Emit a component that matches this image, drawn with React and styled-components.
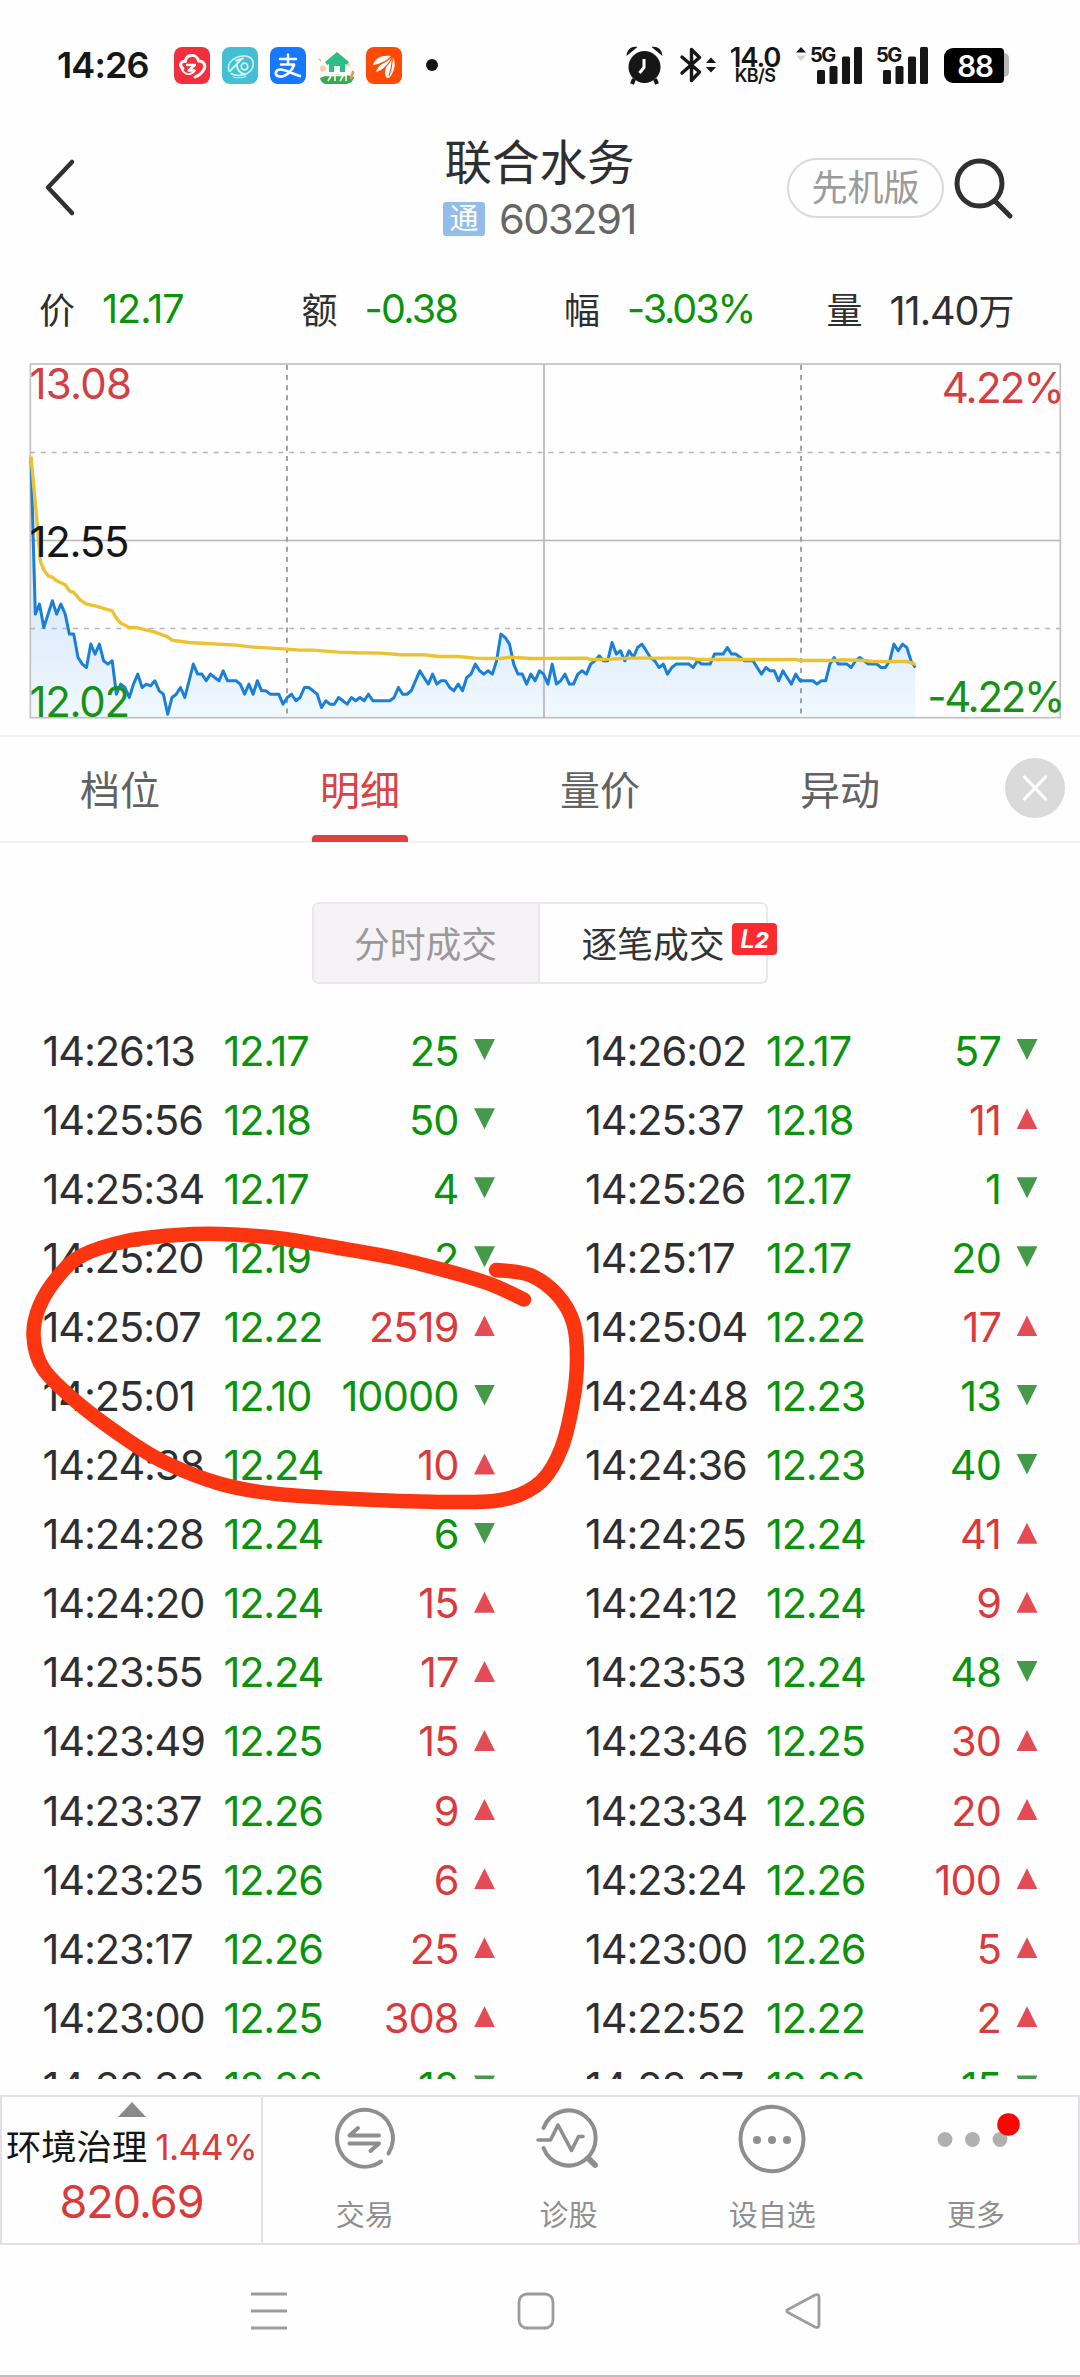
import React from 'react'
import styled, { createGlobalStyle } from 'styled-components'

const GREEN = '#0b930b'
const RED = '#d93a3c'

const GlobalStyle = createGlobalStyle`
  * {
    box-sizing: border-box;
  }

  body {
    margin: 0;
    background: #fefefe;
    color: #2f2f31;
    font-family: Inter, "Noto Sans CJK SC", sans-serif;
  }

  svg {
    display: block;
    flex: none;
    overflow: visible;
  }
`

const Screen = styled.div`
  position: relative;
  width: 1080px;
  height: 2377px;
  overflow: hidden;
  display: flex;
  flex-direction: column;
  border-bottom: 2px solid #bdbdbd;
`

/* ---------- status bar ---------- */

const StatusBar = styled.div`
  height: 130px;
  padding: 0 71px 0 57px;
  display: flex;
  align-items: center;
  justify-content: space-between;
  color: #161616;
`

const Group = styled.div`
  display: flex;
  align-items: center;
`

const Clock = styled.div`
  width: 117px;
  font-size: 36px;
  font-weight: 600;
  letter-spacing: -0.9px;
`

const AppIcons = styled.div`
  display: flex;
  gap: 12px;
`

const Dot = styled.div`
  width: 12px;
  height: 12px;
  margin-left: 24px;
  border-radius: 50%;
  background: #161616;
`

const Devices = styled.div`
  display: flex;
  gap: 17px;
`

const Speed = styled.div`
  width: 54px;
  margin: 0 14px 0 12px;
  text-align: center;
  font-weight: 600;
  font-size: 27.5px;
  line-height: 22px;
  letter-spacing: -1.2px;
  white-space: nowrap;

  small {
    display: block;
    font-size: 18px;
    line-height: 16px;
    letter-spacing: -0.6px;
  }
`

const SignalText = styled.text`
  font-size: 20px;
  font-weight: 700;
  letter-spacing: -1.6px;
`

const Battery = styled.div`
  display: flex;
  align-items: center;
  margin-left: 16px;

  &::after {
    content: '';
    width: 5px;
    height: 24px;
    border-radius: 0 6px 6px 0;
    background: #b9b7b9;
  }
`

const BatteryLevel = styled.div`
  width: 60px;
  height: 35px;
  padding-left: 2px;
  border-radius: 9px 4px 4px 9px;
  background: #000;
  color: #fff;
  font-size: 29.5px;
  font-weight: 600;
  line-height: 37px;
  text-align: center;
  letter-spacing: -1.2px;
`

/* ---------- header ---------- */

const Header = styled.div`
  height: 116px;
  padding: 0 67px 0 44px;
  display: grid;
  grid-template-columns: 1fr 200px 1fr;
  align-items: center;
`

const TitleBlock = styled.div`
  display: flex;
  flex-direction: column;
  align-items: center;
  gap: 11px;
  margin: 1px 0 0 22px;
`

const Title = styled.div`
  font-size: 47.5px;
  line-height: 50px;
  white-space: nowrap;
`

const Code = styled.div`
  display: flex;
  align-items: center;
  gap: 14px;
  line-height: 40px;
  font-size: 41.5px;
  letter-spacing: -1.4px;
  color: #666;
`

const Tag = styled.span`
  width: 42px;
  height: 34px;
  border-radius: 3px;
  background: #92bdea;
  color: #fff;
  font-size: 29px;
  line-height: 33px;
  letter-spacing: 0;
  text-align: center;
`

const HeaderTools = styled.div`
  display: flex;
  justify-content: flex-end;
  align-items: center;
  gap: 9px;
`

const Pill = styled.div`
  width: 157px;
  height: 60px;
  border: 2px solid #ddd8da;
  border-radius: 30px;
  color: #9b9b9b;
  font-size: 36px;
  line-height: 57px;
  text-align: center;
`

/* ---------- quote summary ---------- */

const Summary = styled.div`
  height: 118px;
  padding: 6px 0 0 39px;
  display: grid;
  grid-template-columns: repeat(4, 262.5px);
  align-items: center;
`

const Stat = styled.div`
  display: flex;
  align-items: center;
  gap: 27px;
  white-space: nowrap;
  font-size: 36px;
`

const StatValue = styled.span`
  margin-top: 1px;
  font-size: 39.5px;
  letter-spacing: ${(p) => p.$spacing || '-1px'};
  color: ${(p) => p.$color || 'inherit'};

  small {
    font-size: 36px;
  }
`

const AxisText = styled.text`
  font-size: 42px;
  letter-spacing: ${(p) => p.$spacing || '-1.2px'};
`

/* ---------- tabs ---------- */

const Tabs = styled.div`
  height: 108px;
  display: flex;
  align-items: stretch;
  border-top: 2px solid #f3f2f3;
  border-bottom: 2px solid #f3f2f3;
`

const Tab = styled.div`
  width: 240px;
  display: flex;
  flex-direction: column;
  align-items: center;
  color: ${(p) => (p.$active ? '#dd4243' : '#626262')};
  font-size: 40px;
  line-height: 108px;

  &::after {
    content: '';
    width: 96px;
    height: 7px;
    margin-top: -10px;
    flex: none;
    border-radius: 4px 4px 0 0;
    background: ${(p) => (p.$active ? '#dd4243' : 'transparent')};
  }
`

const CloseButton = styled.div`
  width: 60px;
  height: 60px;
  margin: 21px 0 0 45px;
  border-radius: 50%;
  background: #dbdadb;
  display: flex;
  align-items: center;
  justify-content: center;
`

const Segmented = styled.div`
  width: 456px;
  height: 82px;
  margin: 59px 0 32px 312px;
  display: flex;
  border: 2px solid #e9e7e9;
  border-radius: 7px;
  flex: none;
`

const Segment = styled.div`
  position: relative;
  width: 227px;
  padding-right: ${(p) => (p.$active ? '0' : '1px')};
  border-right: ${(p) => (p.$active ? '0' : '2px solid #e9e7e9')};
  border-radius: ${(p) => (p.$active ? '0' : '5px 0 0 5px')};
  background: ${(p) => (p.$active ? 'transparent' : '#f6f3f7')};
  color: ${(p) => (p.$active ? '#333' : '#9a989b')};
  font-size: 35.8px;
  line-height: 82px;
  text-align: center;
`

const LevelBadge = styled.span`
  position: absolute;
  top: 19px;
  right: -11px;
  width: 45px;
  height: 32px;
  border-radius: 4px;
  background: #fb2b30;
  color: #fff;
  font-size: 26px;
  font-weight: 600;
  font-style: italic;
  line-height: 32px;

  b {
    font-size: 22px;
    font-weight: 800;
  }
`

/* ---------- tick list ---------- */

const TickList = styled.div`
  height: 1063px;
  flex: none;
  overflow: hidden;
  padding-left: 42.5px;
  display: grid;
  grid-template-columns: repeat(2, 542.5px);
`

const TickRow = styled.div`
  height: 69.1px;
  display: grid;
  grid-template-columns: 181px 110px 124px 37.5px;
  align-items: center;
  font-size: 41.5px;
  letter-spacing: -1.1px;
  white-space: nowrap;
`

const Price = styled.span`
  color: ${GREEN};
  letter-spacing: -1.2px;
`

const Volume = styled.span`
  justify-self: end;
  margin-right: -1px;
  letter-spacing: -0.9px;
  color: ${(p) => (p.$up ? RED : GREEN)};
`

const Arrow = styled.i`
  justify-self: end;
  width: 21px;
  height: 21px;
  margin-top: -2px;
  background: ${(p) => (p.$up ? '#e54b55' : '#459a49')};
  clip-path: ${(p) => (p.$up ? 'polygon(50% 0, 100% 100%, 0 100%)' : 'polygon(0 0, 100% 0, 50% 100%)')};
`

/* ---------- bottom bar ---------- */

const BottomBar = styled.div`
  height: 150px;
  margin-top: 16px;
  flex: none;
  display: flex;
  border: 2px solid #e3dfe2;
`

const IndexCell = styled.div`
  width: 261px;
  flex: none;
  border-right: 2px solid #e3dfe2;
  display: flex;
  flex-direction: column;
  align-items: center;
  color: #d93a3c;
`

const IndexName = styled.div`
  display: flex;
  gap: 8px;
  margin-top: 9px;
  font-size: 35.3px;
  line-height: 44px;
  white-space: nowrap;

  b {
    color: #141414;
    font-weight: 400;
  }

  span {
    letter-spacing: -0.6px;
  }
`

const IndexValue = styled.div`
  margin-top: 8px;
  font-size: 45px;
  line-height: 48px;
  letter-spacing: -1px;
`

const Actions = styled.div`
  flex: 1;
  display: grid;
  grid-template-columns: repeat(4, 1fr);
`

const Action = styled.div`
  display: flex;
  flex-direction: column;
  align-items: center;
  gap: 26px;
  padding-top: 8px;
  font-size: 29px;
  line-height: 30px;
  color: #8f8f8f;
`

const MoreIconBox = styled.div`
  height: 70px;
  margin-right: 3px;
`

const NavBar = styled.div`
  flex: 1;
  padding: 2px 0 0 249px;
  display: flex;
  align-items: center;
  gap: 227px;
`

const Annotation = styled.svg`
  position: absolute;
  top: 1200px;
  left: 0;
  pointer-events: none;
`

/* ---------- chart data ---------- */

// one value per minute, in cents above 12.02
const prices = [
  78, 31, 34, 27, 31, 35, 31, 34, 31, 25,
  25, 18, 16, 15, 22, 19, 22, 17, 16, 17,
  7, 10, 9, 6, 10, 13, 9, 10, 9.5, 11,
  8, 7, 1, 6, 7, 9, 6, 11, 16, 13,
  13, 11, 13, 12, 11, 14, 11, 11, 11, 10,
  7, 10, 7, 11, 8, 8, 7, 7, 7, 4,
  6, 7, 5, 6, 9, 9, 8, 7, 3, 5,
  4, 4, 6, 5, 4, 6, 5, 6, 5, 7,
  5, 5, 5, 5, 5, 6, 9, 7, 7, 8,
  11, 14, 12, 10, 13, 10, 11, 11, 9, 8,
  10, 8, 12, 13, 16, 14, 13, 14, 13, 17,
  25, 24, 22, 16, 13, 13, 10, 13, 11, 14,
  13, 10, 16, 10, 11, 13, 10, 10, 13, 14,
  13, 16, 17, 18.5, 17, 17, 22.5, 19, 20, 17,
  20, 18, 21, 22, 20, 18, 17, 15, 16, 13,
  15, 16, 16, 16, 16, 15, 17, 16, 16, 16,
  19, 19, 19, 21, 19, 19, 18, 17, 17, 17,
  15, 13, 15, 14, 14, 11, 14, 12, 10, 13,
  11, 11, 11, 11, 10, 11, 11, 16, 18, 16,
  16, 16, 15, 17, 18, 17, 16, 16, 16, 15,
  15, 17, 22, 20, 22, 21, 17, 15,
]

// [minute, cents above 12.02]
const average = [
  [0, 78.3], [1.1, 63], [2.2, 46.8], [3, 44.3], [4, 42.5], [5, 42], [6, 41], [8, 39.8], [9, 38],
  [10, 37.5], [11.5, 35.3], [13, 34], [15, 33.5], [17, 32.7], [19, 32], [20, 29.8], [21, 28.3],
  [23, 27], [25, 26.9], [29, 25.6], [32, 24.2], [33, 23.2], [37, 22.5], [41, 22.2], [48, 21.7],
  [52, 21.1], [60, 20.5], [63, 20.2], [66, 20.2], [72, 19.6], [76.5, 19.4], [82, 19.3], [86.5, 18.8],
  [92, 18.8], [95.5, 18.3], [100, 18.3], [104, 17.8], [110, 17.7], [112, 18.1], [117, 17.7],
  [130, 17.8], [131, 17.4], [136, 17.5], [140, 17.8], [154, 17.8], [156, 17.4], [179, 17.4],
  [180, 17.1], [188, 17.1], [190, 17.3], [195, 17.1], [197, 16.8], [205, 16.8], [207, 16],
]

const toX = (minute) => (31 + minute * 4.272).toFixed(1)
const toY = (cents) => (353.5 - cents * 3.335).toFixed(1)
const priceLine = prices.map((c, i) => `${toX(i)},${toY(c)}`).join(' ')
const averageLine = average.map(([m, c]) => `${toX(m)},${toY(c)}`).join(' ')

const Chart = () => (
  <svg width="1080" height="371" viewBox="0 0 1080 371">
    <defs>
      <linearGradient id="fill" x1="0" y1="0" x2="0" y2="1">
        <stop offset="0" stopColor="#cfe6fb" />
        <stop offset="0.75" stopColor="#e3effc" />
        <stop offset="1" stopColor="#f1f9fe" />
      </linearGradient>
    </defs>
    <polygon points={`${toX(0)},353 ${priceLine} ${toX(207)},353`} fill="url(#fill)" />
    <g fill="none" stroke="#b9b5b9" strokeWidth="1.7">
      <rect x="30.3" y="0" width="1030" height="353.7" stroke="#c4c0c4" />
      <path d="M30 176.500H1060M544 0V354" />
      <path d="M30 88.500H1060M30 264.500H1060" strokeDasharray="5 5.8" />
      <path d="M287 1V354M801 1V354" stroke="#a3a0a6" strokeWidth="2" strokeDasharray="5 5.1" />
    </g>
    <polyline points={priceLine} fill="none" stroke="#1b7fd8" strokeWidth="3" strokeLinejoin="round" />
    <polyline points={averageLine} fill="none" stroke="#ecc233" strokeWidth="3.4" strokeLinejoin="round" />
    <AxisText x="29.500" y="35" fill="#d24044" $spacing="-0.8px">13.08</AxisText>
    <AxisText x="29.500" y="193" fill="#161616" $spacing="-1.3px">12.55</AxisText>
    <AxisText x="29.500" y="353" fill="#179117" $spacing="-1.3px">12.02</AxisText>
    <AxisText x="1063" y="39" textAnchor="end" fill="#d24044" $spacing="-1.8px">4.22%</AxisText>
    <AxisText x="1063" y="348" textAnchor="end" fill="#179117" $spacing="-2.3px">-4.22%</AxisText>
  </svg>
)

const leftTicks = [
  ['14:26:13', '12.17', 25, 0], ['14:25:56', '12.18', 50, 0], ['14:25:34', '12.17', 4, 0],
  ['14:25:20', '12.19', 2, 0], ['14:25:07', '12.22', 2519, 1], ['14:25:01', '12.10', 10000, 0],
  ['14:24:38', '12.24', 10, 1], ['14:24:28', '12.24', 6, 0], ['14:24:20', '12.24', 15, 1],
  ['14:23:55', '12.24', 17, 1], ['14:23:49', '12.25', 15, 1], ['14:23:37', '12.26', 9, 1],
  ['14:23:25', '12.26', 6, 1], ['14:23:17', '12.26', 25, 1], ['14:23:00', '12.25', 308, 1],
  ['14:22:36', '12.22', 12, 0],
]

const rightTicks = [
  ['14:26:02', '12.17', 57, 0], ['14:25:37', '12.18', 11, 1], ['14:25:26', '12.17', 1, 0],
  ['14:25:17', '12.17', 20, 0], ['14:25:04', '12.22', 17, 1], ['14:24:48', '12.23', 13, 0],
  ['14:24:36', '12.23', 40, 0], ['14:24:25', '12.24', 41, 1], ['14:24:12', '12.24', 9, 1],
  ['14:23:53', '12.24', 48, 0], ['14:23:46', '12.25', 30, 1], ['14:23:34', '12.26', 20, 1],
  ['14:23:24', '12.26', 100, 1], ['14:23:00', '12.26', 5, 1], ['14:22:52', '12.22', 2, 1],
  ['14:22:27', '12.22', 15, 0],
]

const TickColumn = ({ ticks }) => (
  <div>
    {ticks.map(([time, price, volume, up], index) => (
      <TickRow key={index}>
        <span>{time}</span>
        <Price>{price}</Price>
        <Volume $up={up}>{volume}</Volume>
        <Arrow $up={up} />
      </TickRow>
    ))}
  </div>
)

// points of the hand drawn loop, relative to the annotation's top
const loop = [
  [496, 70], [530, 75], [557.5, 95], [573.4, 123], [577, 158], [573.4, 199], [561.5, 248],
  [541.7, 281], [510, 298], [466.6, 302], [375.6, 300], [277, 294], [221, 284], [166, 263],
  [130.5, 242], [79, 204], [43.5, 169], [33.6, 137], [39.5, 106], [59.3, 75], [83, 55],
  [126.5, 41], [174, 35.3], [221, 34], [277, 38], [336, 47.5], [395, 58], [447, 71],
  [490, 84], [524, 99.5],
]

const smooth = (pts) =>
  pts.slice(0, -1).reduce((d, p, i) => {
    const before = pts[i - 1] || p
    const next = pts[i + 1]
    const after = pts[i + 2] || next
    const c1 = [p[0] + (next[0] - before[0]) / 6, p[1] + (next[1] - before[1]) / 6]
    const c2 = [next[0] - (after[0] - p[0]) / 6, next[1] - (after[1] - p[1]) / 6]
    return `${d}C${c1} ${c2} ${next}`
  }, `M${pts[0]}`)

/* ---------- icons ---------- */

const CloudApp = () => (
  <svg width="36" height="37" viewBox="0 0 36 37" fill="none" stroke="#fff" strokeLinecap="round" strokeLinejoin="round">
    <rect width="36" height="37" rx="8" fill="#f2303d" stroke="none" />
    <path d="M9 21.500C4 18 8 13.500 11.500 14.500C11 7 23 6 24.500 14C31 14 32 20 29.500 23C28 26 25 28.500 21 30" strokeWidth="2.900" />
    <path d="M13 18H21L14.500 23.500H20" strokeWidth="2.300" />
    <path d="M7.500 22C11 28 17 29 21 23.500" strokeWidth="1.800" />
  </svg>
)

const StoneApp = () => (
  <svg width="36" height="37" viewBox="0 0 36 37" fill="none" stroke="#d3f3f7" strokeLinecap="round">
    <rect width="36" height="37" rx="8" fill="#45bfd2" stroke="none" />
    <path d="M7 24C4 15 14 8 24 9C34 11 33 22 25 26.500C20 29 13 29 9 26.500" strokeWidth="1.500" />
    <path d="M14 13.500L21 11.500M19 12.500C14 18 11 21 8 24M15 18C15 23 18 26 23 27.500" strokeWidth="1.900" />
    <circle cx="22.500" cy="19.500" r="3.300" strokeWidth="1.700" />
    <path d="M11 30C15 31.500 21 31 24 29.500" strokeWidth="1" />
  </svg>
)

const PayApp = () => (
  <svg width="36" height="37" viewBox="0 0 36 37" fill="none" stroke="#fff" strokeLinecap="round">
    <rect width="36" height="37" rx="8" fill="#1677ff" stroke="none" />
    <path d="M10 12H26M18 7.500V17M11 17.500H24" strokeWidth="2.500" />
    <path d="M24 18C22 24 16 30 9.500 29.500C4 28.500 5 22.500 10.500 22.500C16 22.500 22 27 30 29" strokeWidth="2.700" />
  </svg>
)

const FarmApp = () => (
  <svg width="36" height="37" viewBox="0 0 36 37">
    <rect width="36" height="37" rx="8" fill="#fdfdf6" />
    <circle cx="5" cy="21.500" r="3" fill="#f8cfa4" />
    <circle cx="31" cy="18" r="1.600" fill="#f5d9b3" />
    <path d="M1 12L3 14" stroke="#a9c8b8" strokeWidth="1.200" />
    <path d="M2 31C10 27 28 27 36 30C35 35 31 37 27 37H9C5 37 3 35 2 31Z" fill="#35ab55" />
    <path d="M19 5L31 15L29 18L27 17V25H11V17L9 18L7 15Z" fill="#2dbd8b" />
    <rect x="16" y="19" width="6" height="6" fill="#f7fff9" />
    <path d="M8 28.500H29M10 34L13 29M17 34V29M22 34L25 29M28 34V29" stroke="#f3fbe9" strokeWidth="1.700" />
    <path d="M33 31L35 25" stroke="#e8964f" strokeWidth="2.600" strokeLinecap="round" />
  </svg>
)

const FeatherApp = () => (
  <svg width="36" height="37" viewBox="0 0 36 37" fill="#fff">
    <rect width="36" height="37" rx="8" fill="#fd4b05" />
    <path d="M7 18C9 11 16 8 25 9C20 14 14 17 7 18Z" />
    <path d="M10 25C12 19 18 13 25.500 10C23 17 18 23 10 25Z" />
    <path d="M20 30C17 23 22 16 26.500 10C31 16 28 26 23 31C21 31 20 31 20 30Z" />
    <path d="M9 19.500C16 17 21 14 26 9.500M14 25C20 20 24 15 27 10M23 29C25 23 26 18 26.500 12" stroke="#fd4b05" strokeWidth="1.100" fill="none" />
  </svg>
)

const AlarmIcon = () => (
  <svg width="37" height="38" viewBox="0 0 37 38">
    <circle cx="18.500" cy="21" r="16" fill="#161616" />
    <path d="M0.500 10C1 3 6 0 11.500 1ZM36.500 10C36 3 31 0 25.500 1Z" fill="#161616" />
    <path d="M8 33L6 38M29 33L31 38" stroke="#161616" strokeWidth="4" />
    <path d="M18 13V21.500L13.500 27" stroke="#fff" strokeWidth="3" fill="none" />
  </svg>
)

const BluetoothIcon = () => (
  <svg width="36" height="38" viewBox="0 0 36 38" fill="#161616">
    <path d="M2 11L19.500 26L11.500 34.500V3.500L19.500 11.500L2 27" fill="none" stroke="#161616" strokeWidth="3.400" strokeLinejoin="round" strokeLinecap="round" />
    <path d="M26 17H36L31 11.500ZM26 21H36L31 26.500Z" />
  </svg>
)

const Signal = ({ activity }) => (
  <svg width="66" height="38" viewBox="0 0 66 38" fill="#161616">
    {activity && (
      <>
        <path d="M0 6.500H10L5 1Z" />
        <path d="M0 9.500H10L5 15Z" fill="#d6d2d4" />
      </>
    )}
    <SignalText x="14" y="15.500">5G</SignalText>
    <rect x="21" y="24" width="8" height="14" rx="1.500" />
    <rect x="33.500" y="20" width="8" height="18" rx="1.500" />
    <rect x="46" y="10.500" width="8" height="27.500" rx="1.500" />
    <rect x="58" y="1" width="8" height="37" rx="1.500" />
  </svg>
)

const TradeIcon = () => (
  <svg width="68" height="70" viewBox="0 0 68 70" fill="none" stroke="#8e8e8e" strokeWidth="4" strokeLinecap="round" strokeLinejoin="round">
    <path d="M50 56.500A28 28.500 0 1 1 57.500 48.500" />
    <path d="M48 30.500H18.500L27 23M18.500 38.500H48L39.500 46" />
  </svg>
)

const DiagnoseIcon = () => (
  <svg width="68" height="70" viewBox="0 0 68 70" fill="none" stroke="#8e8e8e" strokeWidth="4" strokeLinecap="round" strokeLinejoin="round">
    <path d="M8.500 23A27 27.500 0 1 1 8.500 43" />
    <path d="M3 35H15.500L23 20L36.500 45.500L43.500 31.500H48" strokeWidth="3.600" />
    <path d="M54 54L60 60" strokeWidth="6" />
  </svg>
)

const WatchIcon = () => (
  <svg width="68" height="70" viewBox="0 0 68 70" fill="#8e8e8e">
    <ellipse cx="34" cy="34" rx="31.500" ry="32.300" fill="none" stroke="#8e8e8e" strokeWidth="4" />
    <circle cx="19" cy="35" r="4" />
    <circle cx="34" cy="35" r="4" />
    <circle cx="49" cy="35" r="4" />
  </svg>
)

const MoreIcon = () => (
  <svg width="80" height="70" viewBox="0 0 80 70" fill="#b0b0b0">
    <circle cx="10" cy="34.500" r="7.400" />
    <circle cx="37.500" cy="34.500" r="7.400" />
    <circle cx="65" cy="34.500" r="7.400" />
    <circle cx="73.500" cy="19.500" r="11.300" fill="#fb0505" />
  </svg>
)

export default function App() {
  return (
    <>
      <GlobalStyle />
      <Screen>
        <StatusBar>
          <Group>
            <Clock>14:26</Clock>
            <AppIcons>
              <CloudApp />
              <StoneApp />
              <PayApp />
              <FarmApp />
              <FeatherApp />
            </AppIcons>
            <Dot />
          </Group>
          <Group>
            <Devices>
              <AlarmIcon />
              <BluetoothIcon />
            </Devices>
            <Speed>
              14.0
              <small>KB/S</small>
            </Speed>
            <Signal activity />
            <Signal />
            <Battery>
              <BatteryLevel>88</BatteryLevel>
            </Battery>
          </Group>
        </StatusBar>

        <Header>
          <svg width="32" height="60" viewBox="0 0 32 60" fill="none" stroke="#303030" strokeWidth="4.500" strokeLinecap="round" strokeLinejoin="round">
            <path d="M28 4L4 29.500L28 55" />
          </svg>
          <TitleBlock>
            <Title>联合水务</Title>
            <Code>
              <Tag>通</Tag>
              603291
            </Code>
          </TitleBlock>
          <HeaderTools>
            <Pill>先机版</Pill>
            <svg width="60" height="62" viewBox="0 0 60 62" fill="none" stroke="#303030" strokeWidth="5">
              <circle cx="26.500" cy="26.500" r="22.500" />
              <path d="M42 44L57 59" strokeLinecap="round" />
            </svg>
          </HeaderTools>
        </Header>

        <Summary>
          <Stat>价<StatValue $color={GREEN}>12.17</StatValue></Stat>
          <Stat>额<StatValue $color={GREEN} $spacing="-1.7px">-0.38</StatValue></Stat>
          <Stat>幅<StatValue $color={GREEN} $spacing="-2.1px">-3.03%</StatValue></Stat>
          <Stat>量<StatValue>11.40<small>万</small></StatValue></Stat>
        </Summary>

        <Chart />

        <Tabs>
          <Tab>档位</Tab>
          <Tab $active>明细</Tab>
          <Tab>量价</Tab>
          <Tab>异动</Tab>
          <CloseButton>
            <svg width="26" height="26" viewBox="0 0 26 26" stroke="#fff" strokeWidth="3.200" strokeLinecap="round">
              <path d="M2.500 2L23.500 24M23.500 2L2.500 24" />
            </svg>
          </CloseButton>
        </Tabs>

        <Segmented>
          <Segment>分时成交</Segment>
          <Segment $active>
            逐笔成交
            <LevelBadge>L<b>2</b></LevelBadge>
          </Segment>
        </Segmented>

        <TickList>
          <TickColumn ticks={leftTicks} />
          <TickColumn ticks={rightTicks} />
        </TickList>

        <BottomBar>
          <IndexCell>
            <svg width="30" height="20" viewBox="0 0 30 20">
              <path d="M15 5L29 20H1Z" fill="#8a8a8a" />
            </svg>
            <IndexName>
              <b>环境治理</b>
              <span>1.44%</span>
            </IndexName>
            <IndexValue>820.69</IndexValue>
          </IndexCell>
          <Actions>
            <Action><TradeIcon />交易</Action>
            <Action><DiagnoseIcon />诊股</Action>
            <Action><WatchIcon />设自选</Action>
            <Action><MoreIconBox><MoreIcon /></MoreIconBox>更多</Action>
          </Actions>
        </BottomBar>

        <NavBar>
          <svg width="40" height="40" viewBox="0 0 40 40" stroke="#9d9b9d" strokeWidth="3">
            <path d="M2 3H38M2 20H38M2 37H38" />
          </svg>
          <svg width="40" height="40" viewBox="0 0 40 40" fill="none" stroke="#9d9b9d" strokeWidth="2.800">
            <rect x="3" y="3" width="34" height="34" rx="8" />
          </svg>
          <svg width="40" height="40" viewBox="0 0 40 40" fill="none" stroke="#9d9b9d" strokeWidth="2.800" strokeLinejoin="round">
            <path d="M5 18.500L32 4Q36 2.500 36 6V34Q36 37.500 32 36L5 21.500Q2.500 20 5 18.500Z" />
          </svg>
        </NavBar>

        <Annotation width="640" height="340" viewBox="0 0 640 340">
          <path d={smooth(loop)} fill="none" stroke="#fb3510" strokeWidth="14.500" strokeLinecap="round" />
        </Annotation>
      </Screen>
    </>
  )
}
